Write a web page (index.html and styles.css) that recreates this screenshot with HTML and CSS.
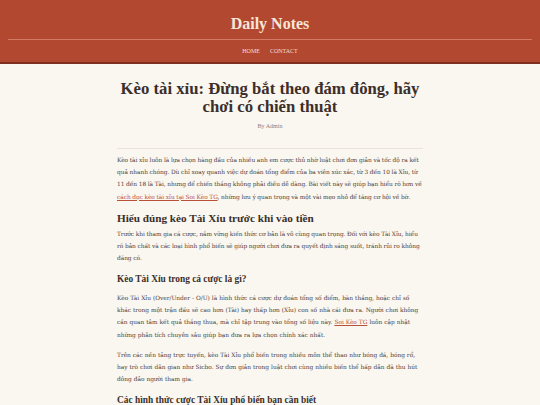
FILE: index.html
```html
<!DOCTYPE html>
<html lang="vi">
<head>
<meta charset="utf-8">
<title>Daily Notes</title>
<link rel="stylesheet" href="styles.css">
</head>
<body>
<header class="site-header">
  <div class="brand">Daily Notes</div>
  <nav class="nav">
    <a href="#">HOME</a>
    <a href="#">CONTACT</a>
  </nav>
</header>
<main class="post">
  <div class="post-head">
    <h1 class="post-title">Kèo tài xỉu: Đừng bắt theo đám đông, hãy chơi có chiến thuật</h1>
    <div class="byline">By Admin</div>
  </div>
  <div class="post-body">
    <p>Kèo tài xỉu luôn là lựa chọn hàng đầu của nhiều anh em cược thủ nhờ luật chơi đơn giản và tốc độ ra kết quả nhanh chóng. Dù chỉ xoay quanh việc dự đoán tổng điểm của ba viên xúc xắc, từ 3 đến 10 là Xỉu, từ 11 đến 18 là Tài, nhưng để chiến thắng không phải điều dễ dàng. Bài viết này sẽ giúp bạn hiểu rõ hơn về <a href="#">cách đọc kèo tài xỉu tại Soi Kèo TG</a>, những lưu ý quan trọng và một vài mẹo nhỏ để tăng cơ hội về bờ.</p>
    <h2>Hiểu đúng kèo Tài Xỉu trước khi vào tiền</h2>
    <p>Trước khi tham gia cá cược, nắm vững kiến thức cơ bản là vô cùng quan trọng. Đối với kèo Tài Xỉu, hiểu rõ bản chất và các loại hình phổ biến sẽ giúp người chơi đưa ra quyết định sáng suốt, tránh rủi ro không đáng có.</p>
    <h3>Kèo Tài Xỉu trong cá cược là gì?</h3>
    <p class="loose">Kèo Tài Xỉu (Over/Under - O/U) là hình thức cá cược dự đoán tổng số điểm, bàn thắng, hoặc chỉ số khác trong một trận đấu sẽ cao hơn (Tài) hay thấp hơn (Xỉu) con số nhà cái đưa ra. Người chơi không cần quan tâm kết quả thắng thua, mà chỉ tập trung vào tổng số liệu này. <a href="#">Soi Kèo TG</a> luôn cập nhật những phân tích chuyên sâu giúp bạn đưa ra lựa chọn chính xác nhất.</p>
    <p class="loose">Trên các nền tảng trực tuyến, kèo Tài Xỉu phổ biến trong nhiều môn thể thao như bóng đá, bóng rổ, hay trò chơi dân gian như Sicbo. Sự đơn giản trong luật chơi cùng nhiều biến thể hấp dẫn đã thu hút đông đảo người tham gia.</p>
    <h3>Các hình thức cược Tài Xỉu phổ biến bạn cần biết</h3>
  </div>
</main>
</body>
</html>
```
FILE: styles.css
```css
html, body {
  margin: 0;
  padding: 0;
}
body {
  background: #faf6f0;
  font-family: "Liberation Serif", serif;
  color: #4a3d38;
}
.site-header {
  background: #b34831;
  border-bottom: 2px solid #7d2f20;
  height: 62px;
  padding: 0 8px;
  display: flex;
  flex-direction: column;
}
.brand {
  color: #f6e6d9;
  font-size: 16px;
  font-weight: bold;
  text-align: center;
  line-height: 48px;
  height: 40px;
  border-bottom: 1px solid #d37a66;
  box-sizing: border-box;
}
.nav {
  display: flex;
  justify-content: center;
  gap: 10px;
  padding-top: 6px;
  line-height: 10px;
}
.nav a {
  color: #f2dcd2;
  text-decoration: none;
  font-size: 6px;
}
.post {
  width: 306px;
  margin: 0 auto;
  padding-top: 16px;
}
.post-head {
  text-align: center;
  border-bottom: 1px solid #ebe3da;
  padding-bottom: 18px;
}
.post-title {
  margin: 0;
  font-size: 16.7px;
  line-height: 18px;
  color: #3b2f2b;
  font-weight: bold;
}
.byline {
  margin-top: 6px;
  font-size: 6px;
  line-height: 8px;
  color: #8b807a;
}
.post-body {
  padding-top: 5px;
}
.post-body p {
  font-family: "DejaVu Serif", serif;
  font-size: 5.85px;
  line-height: 12.2px;
  letter-spacing: -0.04px;
  word-spacing: -0.12px;
  margin: 0 0 8px;
  color: #4a3d38;
}
.post-body p.loose {
  letter-spacing: -0.015px;
  word-spacing: 0.15px;
}
.post-body a {
  color: #b9503a;
}
.post-body h2 {
  font-size: 11.2px;
  color: #3b2f2b;
  margin: 8px 0 3px;
  line-height: 14px;
}
.post-body h3 {
  font-size: 9.4px;
  color: #3b2f2b;
  margin: 9px 0 6.5px;
  line-height: 12px;
}
```
